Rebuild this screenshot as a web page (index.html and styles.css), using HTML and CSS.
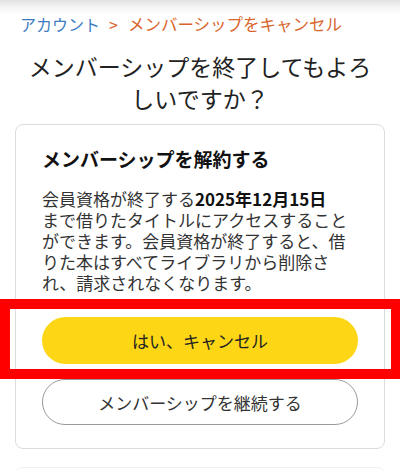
FILE: index.html
```html
<!DOCTYPE html>
<html lang="ja">

<head>
    <meta charset="utf-8">
    <meta name="viewport" content="width=device-width, initial-scale=1.0">
    <title>メンバーシップをキャンセル</title>
    <link rel="stylesheet" href="styles.css">
</head>

<body>
    <nav class="crumbs">
        <a class="crumb_link" href="#">アカウント</a><span class="crumb_sep">&gt;</span><span class="crumb_current">メンバーシップをキャンセル</span>
    </nav>
    <main>
        <h1 class="title">メンバーシップを終了してもよろしいですか？</h1>
        <section class="card">
            <h2>メンバーシップを解約する</h2>
            <p>会員資格が終了する<b>2025年12月15日</b><br>まで借りたタイトルにアクセスすることができます。会員資格が終了すると、借りた本はすべてライブラリから削除され、請求されなくなります。</p>
            <div class="actions">
                <div class="highlight"></div>
                <button class="pointer yes_button">はい、キャンセル</button>
                <button class="pointer keep_button">メンバーシップを継続する</button>
            </div>
        </section>
        <div class="next_card"></div>
    </main>
</body>

</html>
```

FILE: styles.css
```css
* {
    box-sizing: border-box;
}

body {
    margin: 0;
    font-family: "Noto Sans CJK JP", "Noto Sans", sans-serif;
    color: #222;
    background: linear-gradient(#e2e2e2, #f6f6f6 8px, #fff 16px) no-repeat;
}

.crumbs {
    padding: 13px 20px 0;
    font-size: 16px;
    line-height: 22px;
}

.crumb_link {
    color: #3d7cc2;
    text-decoration: none;
}

.crumb_sep {
    margin: 0 10px 0 9px;
    color: #d8652c;
}

.crumb_current {
    color: #d8652c;
    font-size: 16.5px;
}

.title {
    margin: 15px 0 0;
    padding: 0 20px;
    font-size: 23px;
    font-weight: 400;
    line-height: 32px;
    text-align: center;
    color: #222;
}

.card {
    margin: 10px 15px 0;
    padding: 21px 26px 23px;
    border: 1px solid #dcdcdc;
    border-radius: 8px;
}

.card h2 {
    margin: 0;
    font-size: 19px;
    font-weight: 700;
    line-height: 26px;
    color: #111;
}

.card p {
    margin: 16px 0 0;
    font-size: 17px;
    line-height: 21px;
    color: #333;
}

.card b {
    font-weight: 700;
    color: #111;
}

.actions {
    position: relative;
    display: flex;
    flex-direction: column;
    gap: 15px;
    margin-top: 24px;
}

.actions button {
    display: block;
    width: 100%;
    border-radius: 24px;
    font-family: inherit;
    font-size: 17px;
}

.yes_button {
    height: 47px;
    background: #fdd615;
    border: none;
    color: #222;
}

.keep_button {
    height: 46px;
    background: #fff;
    border: 1px solid #999;
    color: #333;
}

.highlight {
    position: absolute;
    top: -18px;
    left: -42px;
    right: -43px;
    height: 80px;
    border: 10px solid #ff0000;
    pointer-events: none;
}

.next_card {
    margin: 18px 15px 0;
    height: 10px;
    border-top: 1px solid #f0f0f0;
    border-radius: 8px 8px 0 0;
}

.pointer {
    cursor: pointer;
}
```
